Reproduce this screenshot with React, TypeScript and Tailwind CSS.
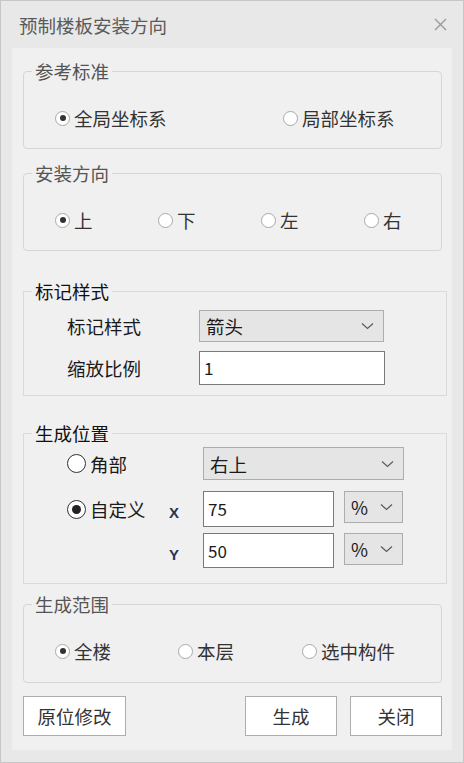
import React from "react";

const font = { fontFamily: '"Noto Sans CJK SC", "Noto Sans", sans-serif' };

const Chevron = () => (
  <svg width="13" height="8" viewBox="0 0 13 8" fill="none">
    <path d="M1 1.5 L6.5 6.5 L12 1.5" stroke="#5c5c5c" strokeWidth="1.2" />
  </svg>
);

const Radio = ({ label, checked, big }: any) => (
  <div className="flex items-center">
    {big ? (
      <span className="w-[19px] h-[19px] rounded-full border-[1.5px] border-[#333] bg-white flex items-center justify-center">
        {checked && <span className="w-[9px] h-[9px] rounded-full bg-[#222]" />}
      </span>
    ) : (
      <span className="w-[15px] h-[15px] rounded-full border border-[#a8a8a8] bg-white flex items-center justify-center">
        {checked && <span className="w-[6px] h-[6px] rounded-full bg-[#333]" />}
      </span>
    )}
    <span className={big ? "ml-[4px] text-[#1a1a1a]" : "ml-[4px] text-[#333]"}>{label}</span>
  </div>
);

const Select = ({ value, className }: any) => (
  <div
    className={
      "flex items-center justify-between bg-[#e5e5e5] border border-[#adadad] pl-[6px] pr-[9px] text-[#1a1a1a] " +
      className
    }
  >
    <span>{value}</span>
    <Chevron />
  </div>
);

const Input = ({ value, className }: any) => (
  <div className={"flex items-center bg-white border border-[#7a7a7a] pl-[4px] text-[17px] text-[#1a1a1a] " + className}>
    {value}
  </div>
);

export default function App() {
  return (
    <div
      className="w-[464px] h-[763px] border border-[#c6c6c6] bg-[#e8e8e8] flex flex-col text-[18.5px] leading-[24px]"
      style={font}
    >
      {/* title */}
      <div className="h-[47px] flex items-center justify-between pl-[18px] pr-[16px]">
        <span className="text-[#5a5a5a]">预制楼板安装方向</span>
        <svg width="13" height="13" viewBox="0 0 13 13">
          <path d="M1 1 L12 12 M12 1 L1 12" stroke="#999" strokeWidth="1.4" />
        </svg>
      </div>

      <div className="flex-1 mx-[11px] mb-[12px] bg-[#f0f0f0] pt-[11px] pl-[11px] pr-[10px] flex flex-col">
        {/* 参考标准 */}
        <fieldset className="h-[90px] border border-[#d6d6d6] rounded-[4px]">
          <legend className="ml-[8px] px-[3px] text-[#555]">参考标准</legend>
          <div className="pt-[23px] pl-[31px] flex">
            <div className="w-[228px]">
              <Radio label="全局坐标系" checked />
            </div>
            <Radio label="局部坐标系" />
          </div>
        </fieldset>

        {/* 安装方向 */}
        <fieldset className="mt-[12px] h-[90px] border border-[#d6d6d6] rounded-[4px]">
          <legend className="ml-[8px] px-[3px] text-[#555]">安装方向</legend>
          <div className="pt-[23px] pl-[31px] flex">
            <div className="w-[103px]">
              <Radio label="上" checked />
            </div>
            <div className="w-[103px]">
              <Radio label="下" />
            </div>
            <div className="w-[103px]">
              <Radio label="左" />
            </div>
            <Radio label="右" />
          </div>
        </fieldset>

        {/* 标记样式 */}
        <fieldset className="mt-[28px] -mr-[5px] h-[117px] border border-[#dadada]">
          <legend className="ml-[8px] px-[3px] text-[#111]">标记样式</legend>
          <div className="pt-[7px] pl-[43px]">
            <div className="flex items-center">
              <span className="w-[132px] text-[#1a1a1a]">标记样式</span>
              <Select value="箭头" className="w-[185px] h-[32px]" />
            </div>
            <div className="flex items-center mt-[9px]">
              <span className="w-[132px] text-[#1a1a1a]">缩放比例</span>
              <Input value="1" className="w-[186px] h-[34px]" />
            </div>
          </div>
        </fieldset>

        {/* 生成位置 */}
        <fieldset className="mt-[25px] -mr-[5px] h-[163px] border border-[#dadada]">
          <legend className="ml-[8px] px-[3px] text-[#111]">生成位置</legend>
          <div className="pt-[2px] pl-[43px]">
            <div className="flex items-center">
              <div className="w-[136px]">
                <Radio label="角部" big />
              </div>
              <Select value="右上" className="w-[201px] h-[33px]" />
            </div>
            <div className="flex items-start mt-[11px]">
              <div className="w-[136px] h-[36px] flex items-center">
                <Radio label="自定义" big checked />
                <span
                  className="ml-auto mr-[24px] mt-[8px] text-[15px] font-bold text-[#253456]"
                  style={{ fontFamily: '"Liberation Sans", sans-serif' }}
                >
                  X
                </span>
              </div>
              <Input value="75" className="w-[131px] h-[36px]" />
              <Select value="%" className="ml-[10px] w-[59px] h-[32px]" />
            </div>
            <div className="flex items-start mt-[6px]">
              <div className="w-[136px] h-[35px] flex items-center">
                <span
                  className="ml-auto mr-[24px] mt-[8px] text-[15px] font-bold text-[#253456]"
                  style={{ fontFamily: '"Liberation Sans", sans-serif' }}
                >
                  Y
                </span>
              </div>
              <Input value="50" className="w-[131px] h-[35px]" />
              <Select value="%" className="ml-[10px] w-[59px] h-[32px]" />
            </div>
          </div>
        </fieldset>

        {/* 生成范围 */}
        <fieldset className="mt-[8px] h-[91px] border border-[#d6d6d6] rounded-[4px]">
          <legend className="ml-[8px] px-[3px] text-[#555]">生成范围</legend>
          <div className="pt-[23px] pl-[31px] flex">
            <div className="w-[123px]">
              <Radio label="全楼" checked />
            </div>
            <div className="w-[124px]">
              <Radio label="本层" />
            </div>
            <Radio label="选中构件" />
          </div>
        </fieldset>

        {/* buttons */}
        <div className="mt-[13px] flex items-center">
          <button className="w-[103px] h-[40px] bg-white border border-[#adadad] text-[#333]">原位修改</button>
          <button className="ml-auto w-[92px] h-[40px] bg-white border border-[#adadad] text-[#333]">生成</button>
          <button className="ml-[13px] w-[92px] h-[40px] bg-white border border-[#adadad] text-[#333]">关闭</button>
        </div>
      </div>
    </div>
  );
}
